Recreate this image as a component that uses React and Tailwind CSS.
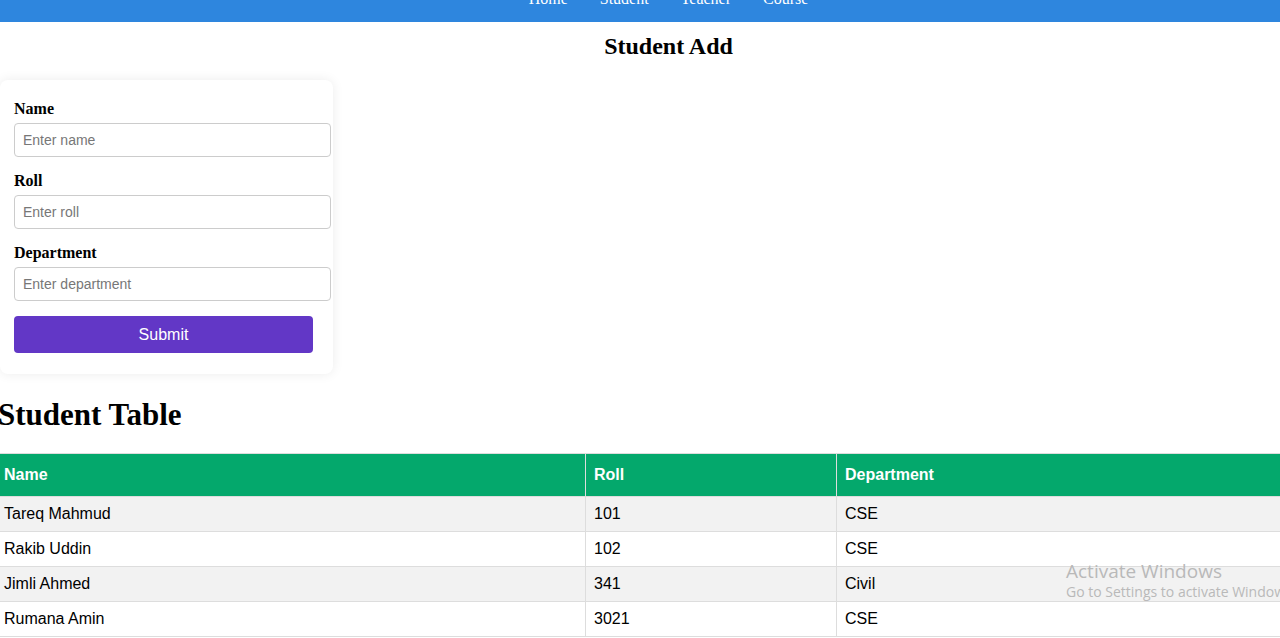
import React, { useState } from "react";

const students = [
  { name: "Tareq Mahmud", roll: "101", department: "CSE" },
  { name: "Rakib Uddin", roll: "102", department: "CSE" },
  { name: "Jimli Ahmed", roll: "341", department: "Civil" },
  { name: "Rumana Amin", roll: "3021", department: "CSE" },
];

const serif = { fontFamily: '"Liberation Serif", "Times New Roman", serif' };

export default function App() {
  const [form, setForm] = useState({ name: "", roll: "", department: "" });

  const update = (key) => (e) => setForm({ ...form, [key]: e.target.value });

  return (
    <div className="relative w-[1280px] h-[638px] overflow-hidden bg-white font-['Liberation_Sans',Arial,sans-serif]">
      {/* Navbar */}
      <nav className="h-[22px] bg-[#2e86de] overflow-hidden">
        <ul className="flex justify-center gap-8 pl-[57px] -mt-[11px] font-['Liberation_Serif',serif] text-[16px] leading-[20px] text-white">
          <li>Home</li>
          <li>Student</li>
          <li>Teacher</li>
          <li>Course</li>
        </ul>
      </nav>

      {/* Student Add */}
      <h2 className="mt-[10px] pl-[57px] text-center font-['Liberation_Serif',serif] font-bold text-[24px] leading-[28px] text-black">
        Student Add
      </h2>

      <form
        className="mt-[20px] w-[333px] bg-white rounded-lg shadow-[0_0_12px_rgba(0,0,0,0.08)] pt-[20px] pb-[21px] px-[14px]"
        onSubmit={(e) => e.preventDefault()}
      >
        <label className="block mb-[5px] font-['Liberation_Serif',serif] font-bold text-[16px] leading-[18px] text-black">
          Name
        </label>
        <input
          value={form.name}
          onChange={update("name")}
          placeholder="Enter name"
          className="block w-[317px] h-[34px] px-2 border border-[#ccc] rounded text-[14px] placeholder:text-[#777] outline-none"
        />
        <label className="block mt-[15px] mb-[5px] font-['Liberation_Serif',serif] font-bold text-[16px] leading-[18px] text-black">
          Roll
        </label>
        <input
          value={form.roll}
          onChange={update("roll")}
          placeholder="Enter roll"
          className="block w-[317px] h-[34px] px-2 border border-[#ccc] rounded text-[14px] placeholder:text-[#777] outline-none"
        />
        <label className="block mt-[15px] mb-[5px] font-['Liberation_Serif',serif] font-bold text-[16px] leading-[18px] text-black">
          Department
        </label>
        <input
          value={form.department}
          onChange={update("department")}
          placeholder="Enter department"
          className="block w-[317px] h-[34px] px-2 border border-[#ccc] rounded text-[14px] placeholder:text-[#777] outline-none"
        />
        <button
          type="submit"
          className="block mt-[15px] w-[299px] h-[37px] rounded bg-[#6237c6] text-white text-[16px]"
        >
          Submit
        </button>
      </form>

      {/* Student Table */}
      <h1
        style={serif}
        className="mt-[22px] -ml-[2px] font-bold text-[31px] leading-[37px] text-black"
      >
        Student Table
      </h1>

      <table className="mt-[20px] -ml-[5px] w-[1300px] border-collapse table-fixed text-[16px] text-black">
        <colgroup>
          <col className="w-[590px]" />
          <col className="w-[251px]" />
          <col />
        </colgroup>
        <thead>
          <tr className="bg-[#04a86c] text-white">
            <th className="text-left font-bold px-2 py-3 leading-[18px] border border-[#ddd]">Name</th>
            <th className="text-left font-bold px-2 py-3 leading-[18px] border border-[#ddd]">Roll</th>
            <th className="text-left font-bold px-2 py-3 leading-[18px] border border-[#ddd]">Department</th>
          </tr>
        </thead>
        <tbody>
          {students.map((s, i) => (
            <tr key={s.roll} className={i % 2 === 0 ? "bg-[#f2f2f2]" : "bg-white"}>
              <td className="px-2 py-2 leading-[18px] border border-[#ddd]">{s.name}</td>
              <td className="px-2 py-2 leading-[18px] border border-[#ddd]">{s.roll}</td>
              <td className="px-2 py-2 leading-[18px] border border-[#ddd]">{s.department}</td>
            </tr>
          ))}
        </tbody>
      </table>

      {/* Windows watermark */}
      <div className="absolute left-[1066px] top-[560px] whitespace-nowrap font-['Open_Sans',sans-serif] text-[#b9b9b9] pointer-events-none">
        <div className="text-[19px] leading-[22px]">Activate Windows</div>
        <div className="text-[14px] leading-[20px]">Go to Settings to activate Windows.</div>
      </div>
    </div>
  );
}
